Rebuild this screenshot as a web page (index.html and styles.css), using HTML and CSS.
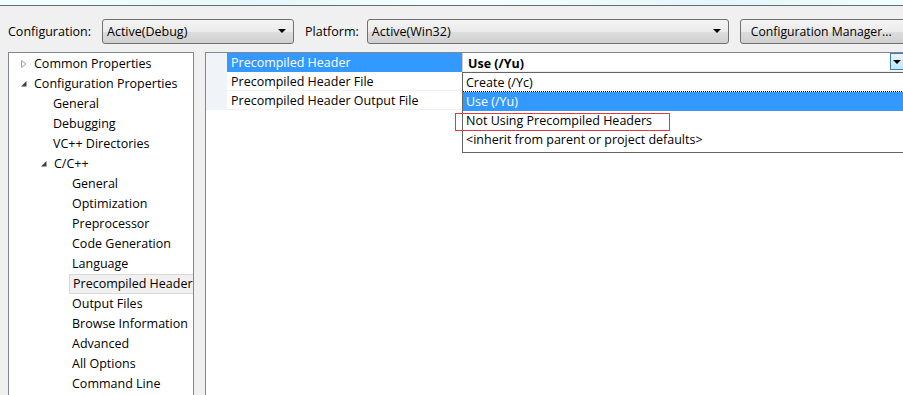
FILE: index.html
```html
<!DOCTYPE html>
<html lang="en">
<head>
  <meta charset="UTF-8">
  <title>Property Pages</title>
  <link rel="stylesheet" href="styles.css">
</head>
<body>
  <div class="glass"></div>
  <div class="toolbar">
    <span class="label">Configuration:</span>
    <div class="combo combo-config"><span>Active(Debug)</span><i class="arrow"></i></div>
    <span class="label label-platform">Platform:</span>
    <div class="combo combo-platform"><span>Active(Win32)</span><i class="arrow"></i></div>
    <button class="btn">Configuration Manager...</button>
  </div>

  <div class="main">
    <ul class="tree">
      <li class="lvl0"><svg class="tw" width="8" height="10" viewBox="0 0 8 10"><path d="M1.5 1.5 L6 5 L1.5 8.5 Z" fill="none" stroke="#a0a0a0"/></svg>Common Properties</li>
      <li class="lvl0"><svg class="tw" width="8" height="10" viewBox="0 0 8 10"><path d="M1 7.5 L6.5 7.5 L6.5 2 Z" fill="#404040"/></svg>Configuration Properties</li>
      <li class="lvl1">General</li>
      <li class="lvl1">Debugging</li>
      <li class="lvl1">VC++ Directories</li>
      <li class="lvl1 parent"><svg class="tw" width="8" height="10" viewBox="0 0 8 10"><path d="M1 7.5 L6.5 7.5 L6.5 2 Z" fill="#404040"/></svg>C/C++</li>
      <li class="lvl2">General</li>
      <li class="lvl2">Optimization</li>
      <li class="lvl2">Preprocessor</li>
      <li class="lvl2">Code Generation</li>
      <li class="lvl2">Language</li>
      <li class="lvl2 current"><span>Precompiled Header</span></li>
      <li class="lvl2">Output Files</li>
      <li class="lvl2">Browse Information</li>
      <li class="lvl2">Advanced</li>
      <li class="lvl2">All Options</li>
      <li class="lvl2">Command Line</li>
    </ul>

    <div class="grid">
      <div class="rows">
        <div class="row selected">
          <div class="gutter"></div>
          <div class="name">Precompiled Header</div>
          <div class="value"><b>Use (/Yu)</b><span class="drop-btn"><i class="arrow"></i></span></div>
        </div>
        <div class="row">
          <div class="gutter"></div>
          <div class="name">Precompiled Header File</div>
          <div class="value"></div>
        </div>
        <div class="row">
          <div class="gutter"></div>
          <div class="name">Precompiled Header Output File</div>
          <div class="value"></div>
        </div>
      </div>

      <ul class="dropdown">
        <li>Create (/Yc)</li>
        <li class="hl">Use (/Yu)</li>
        <li>Not Using Precompiled Headers</li>
        <li>&lt;inherit from parent or project defaults&gt;</li>
      </ul>
      <div class="mark"></div>
    </div>
  </div>
</body>
</html>
```

FILE: styles.css
```css
html, body {
  margin: 0;
  height: 395px;
  overflow: hidden;
}
body {
  background: #f0f0f0;
  font-family: "Open Sans", "Noto Sans", sans-serif;
  font-size: 12.5px;
  color: #000;
}
.glass {
  height: 5px;
  background: linear-gradient(90deg, #f2ffff, #e6f8fb 30%, #f4ffff 50%, #e4f6fa 80%, #f0ffff);
  border-bottom: 1px solid #6b6b6b;
}

/* toolbar */
.toolbar {
  display: flex;
  align-items: center;
  height: 24px;
  margin-top: 13px;
  padding-left: 8px;
}
.label { margin-right: 11px; flex: none; }
.label-platform { margin-left: 11px; margin-right: 8px; }
.combo, .btn {
  box-sizing: border-box;
  flex: none;
  height: 25px;
  border: 1px solid #707070;
  border-radius: 3px;
  background: linear-gradient(#f3f3f3, #ebebeb 50%, #dddddd 51%, #d0d0d0);
}
.combo {
  display: flex;
  align-items: center;
  justify-content: space-between;
  padding: 0 7px 0 4px;
}
.combo-config { width: 192px; }
.combo-platform { width: 362px; }
.arrow {
  width: 0;
  height: 0;
  border-left: 4px solid transparent;
  border-right: 4px solid transparent;
  border-top: 4px solid #000;
}
.btn {
  margin-left: 11px;
  width: 170px;
  padding: 0 0 0 10px;
  text-align: left;
  font: inherit;
  font-size: 12.2px;
  color: #000;
}

/* panels */
.main {
  display: flex;
  margin-top: 9px;
  padding-left: 8px;
}
.tree {
  list-style: none;
  margin: 0;
  padding: 1px 0 0;
  width: 184px;
  height: 400px;
  background: #fff;
  border: 1px solid #828790;
  overflow: hidden;
}
.tree li {
  height: 20px;
  line-height: 20px;
  white-space: nowrap;
  display: flex;
  align-items: center;
}
.tw { margin-right: 6px; flex: none; }
.lvl0 { padding-left: 11px; }
.lvl1 { padding-left: 44px; }
.lvl1.parent { padding-left: 31px; }
.lvl2 { padding-left: 63px; }
.tree .current { padding-left: 60px; }
.current span {
  box-sizing: border-box;
  height: 20px;
  flex: 1;
  padding-left: 3px;
  border: 1px solid #d9d9d9;
  border-right: none;
  border-radius: 2px 0 0 2px;
  background: #f1f1f1;
  line-height: 18px;
}

.grid {
  position: relative;
  flex: 1;
  margin-left: 11px;
  height: 400px;
  background: #fff;
  border: 1px solid #828790;
  border-right: none;
}
.row {
  display: flex;
  height: 19px;
}
.gutter {
  width: 21px;
  background: #f0f4f9;
}
.name, .value {
  box-sizing: border-box;
  padding-top: 2px;
  line-height: 16px;
  border-bottom: 1px solid #f0f0f0;
  white-space: nowrap;
}
.name {
  width: 235px;
  padding-left: 4px;
}
.value {
  flex: 1;
  display: flex;
  justify-content: space-between;
  padding-left: 5px;
}
.selected .name {
  background: #3399ff;
  color: #fff;
  border-bottom-color: #3399ff;
}
.selected .value { border-left: 1px solid #ccc; padding-top: 0; line-height: 19px; }
.selected .value b { font-weight: 700; padding-top: 1px; }
.drop-btn {
  box-sizing: border-box;
  width: 13px;
  height: 17px;
  border: 1px solid #3c7fb1;
  border-right: none;
  background: linear-gradient(#eaf6fd, #bee6fd);
  display: flex;
  align-items: center;
  justify-content: center;
}

.dropdown {
  position: absolute;
  left: 256px;
  top: 19px;
  right: -2px;
  height: 81px;
  margin: 0;
  padding: 0;
  list-style: none;
  background: #fff;
  border: 1px solid #646464;
  box-sizing: border-box;
}
.dropdown li {
  box-sizing: border-box;
  height: 19px;
  line-height: 18px;
  padding: 1px 0 0 3px;
  white-space: nowrap;
}
.dropdown li:first-child { border-bottom: 1px dotted #000; height: 19px; }
.dropdown .hl {
  background: #3399ff;
  color: #fff;
}
.mark {
  position: absolute;
  left: 249px;
  top: 60px;
  width: 213px;
  height: 16px;
  border: 1px solid #e03a3a;
}
```
